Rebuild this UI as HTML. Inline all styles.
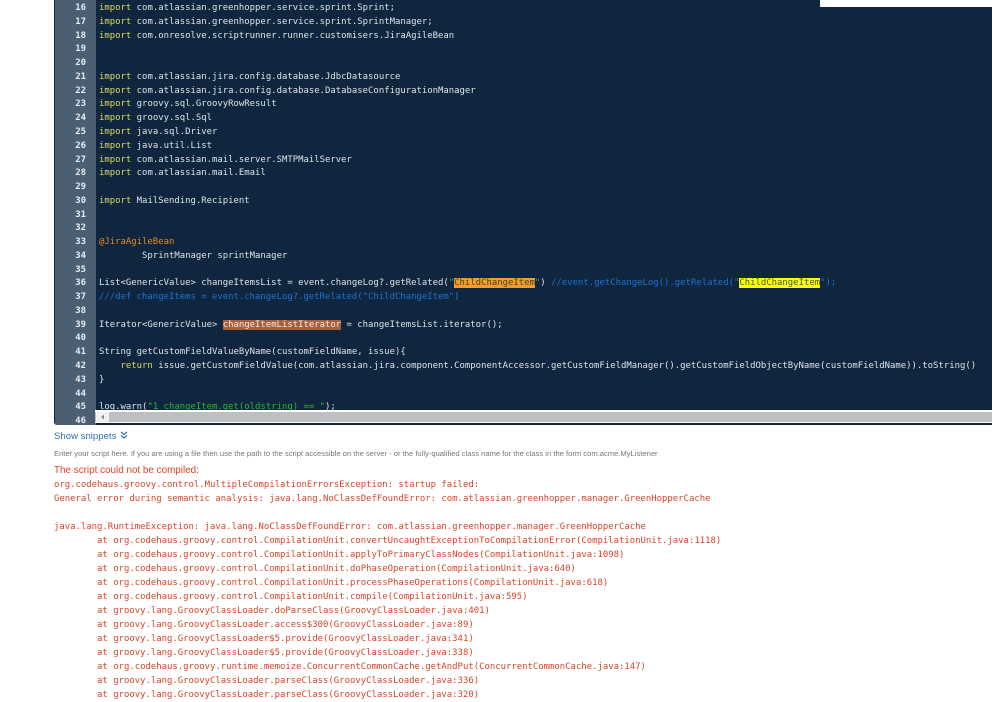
<!DOCTYPE html>
<html><head><meta charset="utf-8"><style>
html,body{margin:0;padding:0;width:999px;height:695px;overflow:hidden;background:#fff}
.a{position:absolute}
pre{margin:0;font-family:"DejaVu Sans Mono","Liberation Mono",monospace;white-space:pre}
#ed{left:54px;top:0;width:938px;height:425px;background:#10263e;overflow:hidden;border-bottom-left-radius:3px}
#gut{left:1px;top:0;width:41px;height:425px;background:#4c5f72}
#nums{left:0;top:2.1px;width:31px;text-align:right;color:#e8edf2;font-size:8.92px;line-height:13.76px;font-weight:bold}
#code{left:45px;top:2.1px;color:#dde4ea;font-size:8.95px;line-height:13.76px;height:408px;overflow:hidden}
.k{color:#dcd964}.an{color:#e98a1f}.c{color:#1c73d6}.s{color:#2db52d}.r{color:#dcd964}
.o{background:#f79a2e;color:#3c4a10}.b{background:#a8603c;color:#eee}.y{background:#ff0;color:#4a5a10}
#err{left:54px;top:478px;font-size:8.95px;line-height:14px;color:#d8442a}
</style></head><body>
<div class="a" id="ed">
<div class="a" id="gut"><pre class="a" id="nums">16
17
18
19
20
21
22
23
24
25
26
27
28
29
30
31
32
33
34
35
36
37
38
39
40
41
42
43
44
45
46</pre></div>
<pre class="a" id="code"><span class="k">import</span> com.atlassian.greenhopper.service.sprint.Sprint;
<span class="k">import</span> com.atlassian.greenhopper.service.sprint.SprintManager;
<span class="k">import</span> com.onresolve.scriptrunner.runner.customisers.JiraAgileBean


<span class="k">import</span> com.atlassian.jira.config.database.JdbcDatasource
<span class="k">import</span> com.atlassian.jira.config.database.DatabaseConfigurationManager
<span class="k">import</span> groovy.sql.GroovyRowResult
<span class="k">import</span> groovy.sql.Sql
<span class="k">import</span> java.sql.Driver
<span class="k">import</span> java.util.List
<span class="k">import</span> com.atlassian.mail.server.SMTPMailServer
<span class="k">import</span> com.atlassian.mail.Email

<span class="k">import</span> MailSending.Recipient


<span class="an">@JiraAgileBean</span>
        SprintManager sprintManager

List&lt;GenericValue&gt; changeItemsList = event.changeLog?.getRelated(<span class="s">"</span><span class="o">ChildChangeItem</span><span class="s">"</span>) <span class="c">//event.getChangeLog().getRelated("</span><span class="y">ChildChangeItem</span><span class="c">");</span>
<span class="c">///def changeItems = event.changeLog?.getRelated("ChildChangeItem")</span>

Iterator&lt;GenericValue&gt; <span class="b">changeItemListIterator</span> = changeItemsList.iterator();

String getCustomFieldValueByName(customFieldName, issue){
    <span class="r">return</span> issue.getCustomFieldValue(com.atlassian.jira.component.ComponentAccessor.getCustomFieldManager().getCustomFieldObjectByName(customFieldName)).toString()
}

log.warn(<span class="s">"1 changeItem.get(oldstring) == "</span>);</pre>
</div>
<!-- white panel top right -->
<div class="a" style="left:820px;top:0;width:172px;height:7px;background:#fff"></div>
<!-- scrollbar -->
<div class="a" style="left:95px;top:410px;width:897px;height:13px;background:#fff"></div>
<div class="a" style="left:95px;top:412px;width:897px;height:10px;background:#bfbfbf"></div>
<div class="a" style="left:96px;top:412px;width:13px;height:10px;background:#f1f1f1"></div>
<svg class="a" style="left:100px;top:414px" width="5" height="6"><path d="M4 0.5L1 3l3 2.5z" fill="#8a8a8a"/></svg>
<!-- below editor -->
<div class="a" style="left:54px;top:430px;font:9.6px/14px 'Liberation Sans',sans-serif;color:#2f6fc4;white-space:nowrap">Show snippets</div>
<svg class="a" style="left:120px;top:431px" width="8" height="9" fill="none" stroke="#2f6fc4" stroke-width="1.2"><path d="M1 1l3 2.5L7 1M1 4.5l3 2.5 3-2.5"/></svg>
<div class="a" style="left:54px;top:449px;font:7.6px/9px 'Liberation Sans',sans-serif;color:#777;white-space:nowrap">Enter your script here. If you are using a file then use the path to the script accessible on the server - or the fully-qualified class name for the class in the form com.acme.MyListener</div>
<div class="a" style="left:54px;top:464px;font:9.9px/14px 'Liberation Sans',sans-serif;color:#d8442a;white-space:nowrap">The script could not be compiled:</div>
<pre class="a" id="err">org.codehaus.groovy.control.MultipleCompilationErrorsException: startup failed:
General error during semantic analysis: java.lang.NoClassDefFoundError: com.atlassian.greenhopper.manager.GreenHopperCache

java.lang.RuntimeException: java.lang.NoClassDefFoundError: com.atlassian.greenhopper.manager.GreenHopperCache
        at org.codehaus.groovy.control.CompilationUnit.convertUncaughtExceptionToCompilationError(CompilationUnit.java:1118)
        at org.codehaus.groovy.control.CompilationUnit.applyToPrimaryClassNodes(CompilationUnit.java:1098)
        at org.codehaus.groovy.control.CompilationUnit.doPhaseOperation(CompilationUnit.java:640)
        at org.codehaus.groovy.control.CompilationUnit.processPhaseOperations(CompilationUnit.java:618)
        at org.codehaus.groovy.control.CompilationUnit.compile(CompilationUnit.java:595)
        at groovy.lang.GroovyClassLoader.doParseClass(GroovyClassLoader.java:401)
        at groovy.lang.GroovyClassLoader.access$300(GroovyClassLoader.java:89)
        at groovy.lang.GroovyClassLoader$5.provide(GroovyClassLoader.java:341)
        at groovy.lang.GroovyClassLoader$5.provide(GroovyClassLoader.java:338)
        at org.codehaus.groovy.runtime.memoize.ConcurrentCommonCache.getAndPut(ConcurrentCommonCache.java:147)
        at groovy.lang.GroovyClassLoader.parseClass(GroovyClassLoader.java:336)
        at groovy.lang.GroovyClassLoader.parseClass(GroovyClassLoader.java:320)</pre>
</body></html>
